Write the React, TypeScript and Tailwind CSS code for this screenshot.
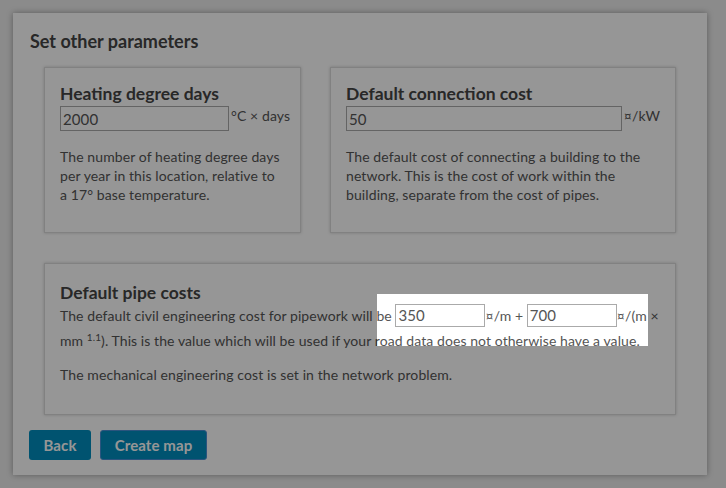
import React from "react";

const font = { fontFamily: "'Source Sans Pro', Lato, 'Noto Sans', sans-serif" };

export default function App() {
  return (
    <div
      className="relative w-[726px] h-[488px] overflow-hidden bg-[#ececec] pt-[13px] pl-[13px]"
      style={font}
    >
      <div className="w-[694px] h-[462px] bg-white shadow-[0_0_6px_rgba(0,0,0,0.35)] px-[16px] pt-[17px] text-[#555] tracking-[0.1px]">
        <h2 className="text-[18px] leading-[22px] font-bold text-[#444] pl-[1px] tracking-normal">Set other parameters</h2>

        <div className="flex gap-[29px] mt-[15px] ml-[15px]">
          <div className="w-[257px] h-[166px] border border-[#dcdcdc] shadow-[0_0_3px_rgba(0,0,0,0.2)] p-[15px] pt-[16px]">
            <h3 className="text-[17.5px] leading-[20px] font-bold text-[#444] tracking-normal">Heating degree days</h3>
            <div className="flex items-start mt-[2px]">
              <input
                className="w-[169px] h-[25px] border border-[#aaa] px-[2px] text-[15px] text-[#555] outline-none"
                style={font}
                defaultValue="2000"
              />
              <span className="text-[14px] leading-[20px] ml-[2px] whitespace-nowrap">°C × days</span>
            </div>
            <p className="mt-[16px] text-[14px] leading-[19px]">
              The number of heating degree days per year in this location, relative to a 17° base temperature.
            </p>
          </div>
          <div className="w-[346px] h-[166px] border border-[#dcdcdc] shadow-[0_0_3px_rgba(0,0,0,0.2)] p-[15px] pt-[16px]">
            <h3 className="text-[17.5px] leading-[20px] font-bold text-[#444] tracking-normal">Default connection cost</h3>
            <div className="flex items-start mt-[2px]">
              <input
                className="w-[280px] h-[25px] border border-[#aaa] px-[2px] text-[15px] text-[#555] outline-none"
                style={font}
                defaultValue="50"
              />
              <span className="text-[14px] leading-[20px] ml-[2px] whitespace-nowrap">¤/kW</span>
            </div>
            <p className="mt-[16px] text-[14px] leading-[19px]">
              The default cost of connecting a building to the network. This is the cost of work within the building,
              separate from the cost of pipes.
            </p>
          </div>
        </div>

        <div className="w-[632px] h-[152px] mt-[30px] ml-[15px] border border-[#dcdcdc] shadow-[0_0_3px_rgba(0,0,0,0.2)] p-[15px] pt-[19px]">
          <h3 className="text-[17.5px] leading-[20px] font-bold text-[#444] tracking-normal">Default pipe costs</h3>
          <p className="text-[14px] leading-[25px] tracking-[0.08px]">
            The default civil engineering cost for pipework will be{" "}
            <input
              className="w-[90px] h-[23px] border border-[#aaa] px-[2px] text-[15px] text-[#555] outline-none align-baseline"
              style={font}
              defaultValue="350"
            />
            ¤/m +{" "}
            <input
              className="w-[90px] h-[23px] border border-[#aaa] px-[2px] text-[15px] text-[#555] outline-none align-baseline"
              style={font}
              defaultValue="700"
            />
            ¤/(m × mm <sup className="text-[10px] leading-none">1.1</sup>). This is the value which will be used if your
            road data does not otherwise have a value.
          </p>
          <p className="mt-[12px] text-[14px] leading-[19px]">
            The mechanical engineering cost is set in the network problem.
          </p>
        </div>

        <div className="flex gap-[9px] mt-[15px]">
          <button className="w-[62px] h-[30px] rounded-[3px] bg-[#008ebe] text-white font-bold text-[15px]" style={font}>
            Back
          </button>
          <button
            className="w-[107px] h-[30px] rounded-[3px] bg-[#008ebe] border border-[#4a8fd6] text-white font-bold text-[15px]"
            style={font}
          >
            Create map
          </button>
        </div>
      </div>

      <div className="absolute left-[377px] top-[294px] w-[271px] h-[52px] shadow-[0_0_0_2000px_rgba(0,0,0,0.41)] pointer-events-none" />
    </div>
  );
}
